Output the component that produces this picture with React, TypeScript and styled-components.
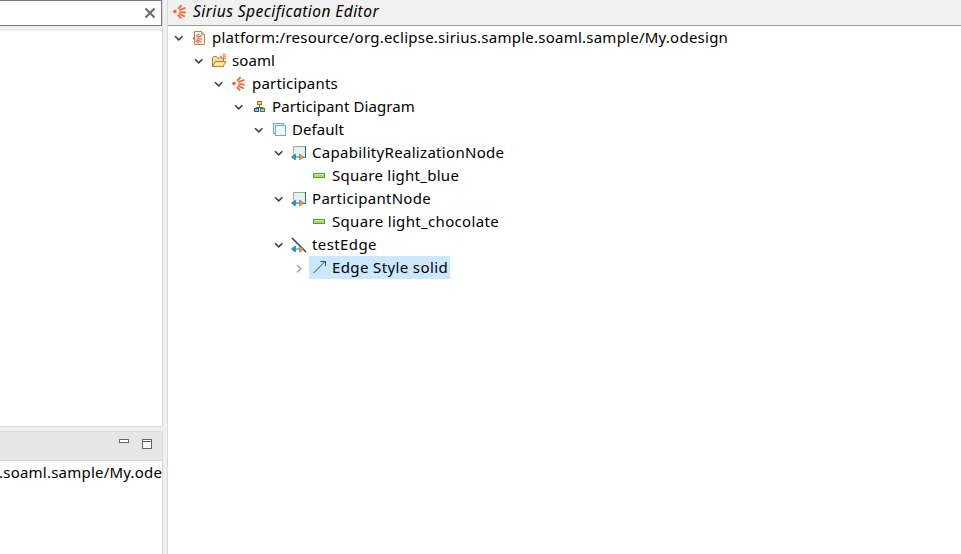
import React from "react";
import styled, { createGlobalStyle, css } from "styled-components";

const GlobalStyle = createGlobalStyle`
  * { box-sizing: border-box; }
  html, body { margin: 0; overflow: hidden; background: #f0f0f0; }
`;

const Workbench = styled.div`
  display: flex;
  width: 961px;
  height: 554px;
  background: #f0f0f0;
  color: #000;
  font: 15px/23px "Noto Sans", sans-serif;
  white-space: nowrap;
`;

const Sidebar = styled.div`
  display: flex;
  flex-direction: column;
  gap: 4px;
  width: 163px;
  flex: none;
  margin-right: 4px;
`;

const OutlinePanel = styled.section`
  display: flex;
  flex-direction: column;
  height: 427px;
  border-right: 1px solid #dadada;
  border-bottom: 1px solid #dadada;
`;

const SearchField = styled.div`
  display: flex;
  align-items: center;
  justify-content: flex-end;
  height: 26px;
  padding-right: 5px;
  background: #fff;
  border: solid #7a7a7a;
  border-width: 1px 1px 1px 0;
`;

const OutlineBody = styled.div`
  flex: 1;
  margin-top: 5px;
  background: #fff;
`;

const LowerPanel = styled.section`
  display: flex;
  flex-direction: column;
  flex: 1;
  border-top: 1px solid #dadada;
  border-right: 1px solid #dadada;
  background: #fff;
`;

const PanelBar = styled.header`
  display: flex;
  align-items: flex-start;
  justify-content: flex-end;
  gap: 13px;
  height: 29px;
  padding: 7px 10px 0 0;
  background: #e6e6e6;
  border-bottom: 1px solid #d6d6d6;
`;

const PathText = styled.div`
  letter-spacing: 0.22px;
  height: 23px;
  margin-left: -1px;
`;

const Editor = styled.main`
  display: flex;
  flex-direction: column;
  flex: 1;
  border-left: 1px solid #dadada;
  background: #fff;
`;

const TitleBar = styled.header`
  display: flex;
  align-items: center;
  height: 26px;
  padding: 0 0 2px 4px;
  gap: 5px;
  background: #f0f0f0;
  border-bottom: 1px solid #a0a0a0;
  font-size: 15.5px;
  font-style: italic;
`;

const Tree = styled.div`
  display: flex;
  flex-direction: column;
`;

const Row = styled.div<{ $level: number }>`
  display: flex;
  height: 23px;
  padding-left: ${(p) => 4 + p.$level * 20}px;
`;

const Twisty = styled.span`
  display: flex;
  align-items: center;
  width: 17px;
`;

const Item = styled.span<{ $selected?: boolean }>`
  display: flex;
  align-items: center;
  padding: 0 2px;
  ${(p) => p.$selected && css`background: #cce8ff;`}
`;

const IconSlot = styled.span`
  display: flex;
  width: 16px;
  height: 16px;
  margin-right: 5px;
`;

const Label = styled.span<{ $tracking: number }>`
  letter-spacing: ${(p) => p.$tracking}px;
`;

const Svg = styled.svg`
  display: block;
  flex: none;
`;

const siriusArt = (
  <g stroke="#f4622f" strokeWidth="1.7" fill="none">
    <circle cx="3" cy="7.5" r="1.8" fill="#f4622f" stroke="none" />
    <path d="M6.2 4.8 9.6 1.2M7.2 6.3 13.6 3.7M7.4 8 13.8 8.6M6.9 9.6 12.8 12.6M5.7 10.8 9.2 14.4" />
  </g>
);

const SiriusIcon = () => <Svg width="16" height="16" viewBox="0 0 16 16">{siriusArt}</Svg>;

const DesignFileIcon = () => (
  <Svg width="16" height="16" viewBox="0 0 16 16">
    <path d="M3.5 1.5H10.5L13.5 4.5V14.5H3.5Z" fill="#f4f6fd" stroke="#ad8a38" />
    <path d="M10.5 1.5V4.5H13.5Z" fill="#ecd398" stroke="#ad8a38" strokeWidth=".7" />
    <g transform="translate(1 3) scale(.72)">{siriusArt}</g>
  </Svg>
);

const FolderIcon = () => (
  <Svg width="16" height="16" viewBox="0 0 16 16">
    <path d="M1.5 13.5V4.5L2.5 3.5H5.5L6.5 5H12.5V13.5Z" fill="#f8dfa0" stroke="#b87c31" />
    <path d="M1.5 13.5 4.5 8.5H15L12 13.5Z" fill="#ffe9ad" stroke="#b87c31" />
    <g transform="translate(8.4 -.5) scale(.52)">{siriusArt}</g>
  </Svg>
);

const DiagramIcon = () => (
  <Svg width="16" height="16" viewBox="0 0 16 16">
    <path d="M8.5 6V8.5M5 11V8.5H12V11" fill="none" stroke="#566986" />
    <rect x="6.5" y="2.5" width="4" height="3" fill="#f6d77c" stroke="#a4721f" />
    <rect x="3.5" y="9.5" width="4" height="3" fill="#9cbce5" stroke="#2d5690" />
    <rect x="9.5" y="9.5" width="4" height="3" fill="#a6d59b" stroke="#397d37" />
  </Svg>
);

const LayerIcon = () => (
  <Svg width="16" height="16" viewBox="0 0 16 16">
    <rect x="2.5" y="1.5" width="10" height="10" fill="#def2fb" stroke="#73aac9" />
    <rect x="4.5" y="3.5" width="10" height="10" fill="#eef9fe" stroke="#73aac9" />
  </Svg>
);

const mappingArrows = (
  <>
    <path d="M3 12H12" stroke="#38718c" />
    <path d="M4.3 9V15L.5 12Z" fill="#16a3dc" stroke="#176f9b" strokeWidth=".7" />
    <path d="M8.7 9V15L12.5 12Z" fill="#f4a445" stroke="#99621e" strokeWidth=".7" />
  </>
);

const NodeIcon = () => (
  <Svg width="16" height="16" viewBox="0 0 16 16">
    <rect x="2.5" y="1.5" width="12" height="11" fill="#e4f2fc" />
    <path d="M2.5 8.5V1.5H14.5" fill="none" stroke="#a5a98b" />
    <path d="M14.5 1V12.5H12" fill="none" stroke="#2f6290" />
    {mappingArrows}
  </Svg>
);

const EdgeIcon = () => (
  <Svg width="16" height="16" viewBox="0 0 16 16">
    <path d="M1 1 15 15" stroke="#1c3580" strokeWidth="1.4" />
    {mappingArrows}
  </Svg>
);

const SquareIcon = () => (
  <Svg width="16" height="16" viewBox="0 0 16 16">
    <rect x="2.5" y="5.5" width="11" height="4" fill="#b8d83e" stroke="#45a060" />
    <path d="M3 6.5H13" stroke="#d8e78a" />
  </Svg>
);

const EdgeStyleIcon = () => (
  <Svg width="16" height="16" viewBox="0 0 16 16">
    <path d="M2.5 13 14 1.5M9.5 1.5H14.5V6" fill="none" stroke="#174f78" />
  </Svg>
);

const ExpandedIcon = () => (
  <Svg width="14" height="14" viewBox="0 0 14 14">
    <path d="M3 5.2 6.7 8.9 10.4 5.2" fill="none" stroke="#404040" strokeWidth="1.6" />
  </Svg>
);

const CollapsedIcon = () => (
  <Svg width="14" height="14" viewBox="0 0 14 14">
    <path d="M5 4 8.7 7.7 5 11.4" fill="none" stroke="#a6a6a6" strokeWidth="1.6" />
  </Svg>
);

type TreeNode = {
  text: string;
  level: number;
  icon: React.FC;
  twisty?: React.FC;
  tracking?: number;
  selected?: boolean;
};

const nodes: TreeNode[] = [
  { text: "platform:/resource/org.eclipse.sirius.sample.soaml.sample/My.odesign", level: 0, icon: DesignFileIcon, twisty: ExpandedIcon, tracking: 0.24 },
  { text: "soaml", level: 1, icon: FolderIcon, twisty: ExpandedIcon, tracking: 0.1 },
  { text: "participants", level: 2, icon: SiriusIcon, twisty: ExpandedIcon, tracking: 0.18 },
  { text: "Participant Diagram", level: 3, icon: DiagramIcon, twisty: ExpandedIcon, tracking: 0.1 },
  { text: "Default", level: 4, icon: LayerIcon, twisty: ExpandedIcon, tracking: 0.05 },
  { text: "CapabilityRealizationNode", level: 5, icon: NodeIcon, twisty: ExpandedIcon, tracking: 0.31 },
  { text: "Square light_blue", level: 6, icon: SquareIcon, tracking: 0.27 },
  { text: "ParticipantNode", level: 5, icon: NodeIcon, twisty: ExpandedIcon, tracking: 0.3 },
  { text: "Square light_chocolate", level: 6, icon: SquareIcon, tracking: 0.33 },
  { text: "testEdge", level: 5, icon: EdgeIcon, twisty: ExpandedIcon, tracking: 0.4 },
  { text: "Edge Style solid", level: 6, icon: EdgeStyleIcon, twisty: CollapsedIcon, tracking: 0.38, selected: true },
];

export default function App() {
  return (
    <>
      <GlobalStyle />
      <Workbench>
        <Sidebar>
          <OutlinePanel>
            <SearchField>
              <Svg width="12" height="12" viewBox="0 0 12 12">
                <path d="M1.5 1.5 10.5 10.5M10.5 1.5 1.5 10.5" stroke="#6e6e6e" strokeWidth="2.2" />
              </Svg>
            </SearchField>
            <OutlineBody />
          </OutlinePanel>
          <LowerPanel>
            <PanelBar>
              <Svg width="10" height="12" viewBox="0 0 10 12">
                <rect x=".5" y=".5" width="9" height="3" fill="#fff" stroke="#646464" />
              </Svg>
              <Svg width="10" height="12" viewBox="0 0 10 12">
                <rect x=".5" y=".5" width="9" height="9" fill="#fff" stroke="#646464" />
                <path d="M0 2.5H10" stroke="#646464" />
              </Svg>
            </PanelBar>
            <PathText>.soaml.sample/My.ode</PathText>
          </LowerPanel>
        </Sidebar>
        <Editor>
          <TitleBar>
            <SiriusIcon />
            <Label $tracking={0.45}>Sirius Specification Editor</Label>
          </TitleBar>
          <Tree role="tree">
            {nodes.map(({ text, level, icon: Icon, twisty: Mark, tracking = 0, selected }) => (
              <Row key={text} $level={level} role="treeitem" aria-selected={!!selected}>
                <Twisty>{Mark && <Mark />}</Twisty>
                <Item $selected={selected}>
                  <IconSlot><Icon /></IconSlot>
                  <Label $tracking={tracking}>{text}</Label>
                </Item>
              </Row>
            ))}
          </Tree>
        </Editor>
      </Workbench>
    </>
  );
}
